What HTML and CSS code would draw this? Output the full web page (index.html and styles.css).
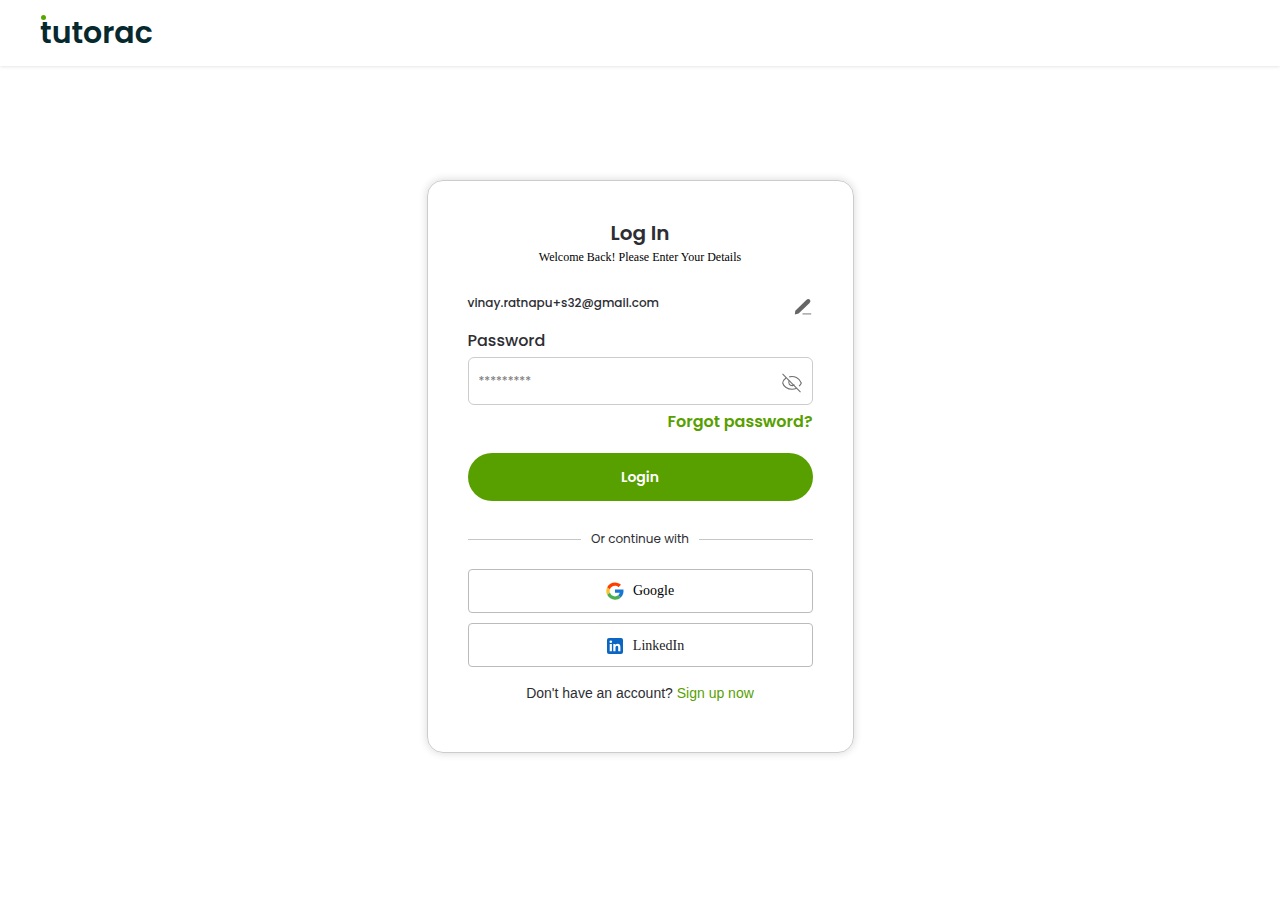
FILE: index.html
```html
<!DOCTYPE html>
<html lang="en">
<head>
<meta charset="utf-8">
<meta name="viewport" content="width=device-width, initial-scale=1">
<title>Log In - tutorac</title>
<link rel="stylesheet" href="styles.css">
</head>
<body>
<header class="site-header">
  <a class="logo" href="#">tutorac</a>
</header>
<main class="page">
  <form class="card">
    <h1 class="title">Log In</h1>
    <p class="subtitle">Welcome Back! Please Enter Your Details</p>
    <div class="account">
      <span class="email">vinay.ratnapu+s32@gmail.com</span>
      <button class="icon-button edit" type="button" aria-label="Edit email">
        <svg width="18" height="18" viewBox="0 0 18 18"><path d="M.8 16.400 1.300 12.800 12.300 2Q14.200.2 15.900 1.700 17.200 3.200 15.600 4.900L4.600 15.500Z" fill="#666"/><path d="M8.500 15.900h8.700" stroke="#999" stroke-width="1.300"/></svg>
      </button>
    </div>
    <label class="label" for="password">Password</label>
    <div class="field">
      <input class="input" id="password" type="password" placeholder="*********">
      <button class="icon-button reveal" type="button" aria-label="Show password">
        <svg width="20" height="20" viewBox="0 0 20 20" fill="none" stroke="#707070" stroke-width="1.1"><path d="M.5.8 18.500 19.200"/><path d="M4.200 4.800C2.200 6.300.9 8.200.7 10c.9 3.700 4.900 6.300 9.300 6.300 1.800 0 3.300-.4 4.700-1.100M7.200 3.900c5-1.400 10.200 1.200 12.100 6.100-.4 1.200-1.200 2.300-2.200 3.200"/><path d="M7.200 7.500c-1.400 2.700.5 5.400 3.300 5.100.8-.1 1.400-.5 1.900-1"/></svg>
      </button>
    </div>
    <a class="forgot" href="#">Forgot password?</a>
    <button class="login" type="submit">Login</button>
    <div class="divider">Or continue with</div>
    <div class="providers">
      <button class="provider" type="button">
        <svg width="18" height="18" viewBox="0 0 48 48"><path fill="#fbc02d" d="M10.500 28.600A14 14 0 0 1 10.500 19.400L3.200 13.900A22.500 22.500 0 0 0 3.200 34.100Z"/><path fill="#ff3d00" d="M24 10.200c3.700 0 6.700 1.300 9.200 3.600l6.600-6.600C35.700 3.400 30.300 1 24 1 14.900 1 7 6.100 3.200 13.900l7.300 5.500C12.500 14 17.800 10.200 24 10.200Z"/><path fill="#4caf50" d="M24 47c6.100 0 11.500-2 15.500-5.900l-7.200-5.700A14 14 0 0 1 10.500 28.600L3.200 34.100C7 41.900 14.900 47 24 47Z"/><path fill="#1976d2" d="M46.500 20H24v8.800h12.700c-.7 2.800-2.200 5-4.400 6.600l7.200 5.700C45.300 35.800 47.500 28.500 46.500 20Z"/></svg>
        Google
      </button>
      <button class="provider linkedin" type="button">
        <svg width="16" height="16" viewBox="0 0 16 16"><rect width="16" height="16" rx="2" fill="#0a66c2"/><circle cx="3.800" cy="3.700" r="1.300" fill="#fff"/><path d="M2.700 6h2.200v7.300H2.700zM6.300 6h2.100v1c.5-.8 1.300-1.200 2.300-1.200 2.100 0 2.700 1.300 2.700 3.300v4.200h-2.200V9.500c0-1.100-.2-1.800-1.200-1.800s-1.500.8-1.500 1.900v3.700H6.300z" fill="#fff"/></svg>
        LinkedIn
      </button>
    </div>
    <p class="signup">Don't have an account? <a class="signup-link" href="#">Sign up now</a></p>
  </form>
</main>
</body>
</html>
```
FILE: styles.css
```css
* { box-sizing: border-box; }
body {
  margin: 0;
  background: #fff;
  color: #2d2e33;
  font-family: Poppins, Inter, sans-serif;
}
button { font: inherit; cursor: pointer; }
a { text-decoration: none; }

.site-header {
  display: flex;
  align-items: center;
  height: 66px;
  padding: 0 40px;
  box-shadow: 0 0 4px rgba(0, 0, 0, 0.16);
}
.logo {
  position: relative;
  color: #05292e;
  font-size: 30px;
  font-weight: 600;
  line-height: 40px;
}
.logo::before {
  content: "";
  position: absolute;
  top: 2px;
  left: 1px;
  width: 5px;
  height: 5px;
  border-radius: 50%;
  background: #58a700;
}

.page {
  display: flex;
  justify-content: center;
  padding: 114px 16px 40px;
}
.card {
  display: flex;
  flex-direction: column;
  width: 100%;
  max-width: 427px;
  padding: 40px 40px 49px;
  border: 1px solid #ccc;
  border-radius: 16px;
  box-shadow: 0 0 8px rgba(0, 0, 0, 0.16);
}
.title {
  margin: 0;
  font-size: 20px;
  font-weight: 600;
  line-height: 24px;
  text-align: center;
}
.subtitle {
  margin: 0 0 24px;
  color: #000;
  font-family: "Liberation Serif", serif;
  font-size: 12px;
  line-height: 24px;
  text-align: center;
}
.account {
  display: flex;
  justify-content: space-between;
  margin-bottom: 12px;
}
.email {
  font-size: 12px;
  font-weight: 500;
  line-height: 20px;
}
.icon-button {
  display: flex;
  padding: 0;
  border: 0;
  background: none;
}
.edit { padding: 5px 1px 1px 0; }
.reveal { padding-top: 4px; }
.label {
  margin-bottom: 4px;
  font-size: 16px;
  font-weight: 500;
  line-height: 24px;
}
.field {
  display: flex;
  align-items: center;
  height: 48px;
  padding: 0 10px;
  border: 1px solid #ccc;
  border-radius: 6px;
}
.input {
  flex: 1;
  min-width: 0;
  padding: 0;
  border: 0;
  outline: 0;
  background: none;
  color: #2d2e33;
  font: 12px/20px Poppins, Inter, sans-serif;
}
.input::placeholder { color: #777; }
.forgot {
  align-self: flex-end;
  margin: 5px 0 19px;
  color: #589f00;
  font-size: 16px;
  font-weight: 600;
  line-height: 24px;
}
.login {
  height: 48px;
  border: 0;
  border-radius: 24px;
  background: #589f00;
  color: #fff;
  font-size: 14px;
  font-weight: 600;
}
.divider {
  display: flex;
  align-items: center;
  gap: 10px;
  margin: 28px 0 20px;
  font-size: 12px;
  line-height: 20px;
}
.divider::before,
.divider::after {
  content: "";
  flex: 1;
  height: 1px;
  background: #c4c8c4;
}
.providers {
  display: grid;
  gap: 10px;
}
.provider {
  display: flex;
  align-items: center;
  justify-content: center;
  gap: 9px;
  height: 44px;
  border: 1px solid #bbb;
  border-radius: 4px;
  background: #fff;
  color: #000;
  font-family: "Liberation Serif", serif;
  font-size: 14px;
}
.linkedin {
  gap: 10px;
  padding: 2px 0 0 11px;
  color: #222;
}
.signup {
  margin: 16px 0 0;
  font-family: "Liberation Sans", sans-serif;
  font-size: 14px;
  line-height: 20px;
  text-align: center;
}
.signup-link { color: #589f00; }
```
